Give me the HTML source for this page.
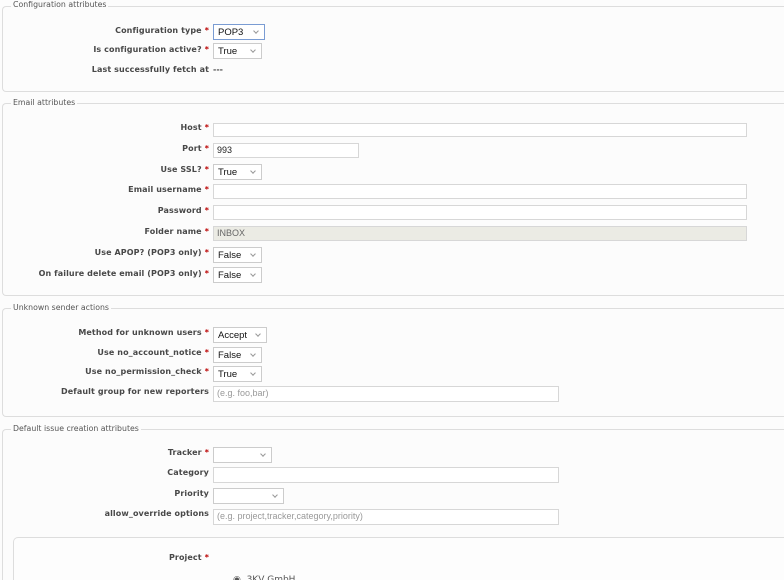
<!DOCTYPE html>
<html style="overflow:hidden;height:580px"><head><style>
*{box-sizing:border-box;margin:0;padding:0}
body{width:784px;height:580px;overflow:hidden;background:#fcfcfc;position:relative;font-family:"DejaVu Sans",Verdana,sans-serif;color:#484848}
.fs{position:absolute;left:2px;width:782px;border:1px solid #ddd;border-right:none;border-radius:4px 0 0 4px}
.lg{position:absolute;left:11px;background:#fcfcfc;padding:0 2px;font-size:7.8px;color:#555;line-height:10px}
.l{position:absolute;right:575px;font-size:8px;font-weight:bold;color:#484848;white-space:nowrap;line-height:10px;letter-spacing:0.1px}
.l b{color:#bb0000;font-weight:bold;margin-left:3px}
.in{position:absolute;left:213px;border:1px solid #d7d7d7;background:#fff;font-family:"Liberation Sans",Arial,sans-serif;font-size:9px;line-height:13px;padding-left:3px;color:#222}
.ph{color:#999}
.sel{position:absolute;left:213px;height:16px;border:1px solid #ccc;background:#fff;font-family:"Liberation Sans",Arial,sans-serif;font-size:9.5px;line-height:15px;padding-left:4px;color:#111}
.sel:after{content:"";position:absolute;right:6px;top:4px;width:3px;height:3px;border-right:1px solid #999;border-bottom:1px solid #999;transform:rotate(45deg)}
</style></head><body>

<div class="fs" style="top:6px;height:86px"></div>
<div class="lg" style="top:0px">Configuration attributes</div>
<div class="l" style="top:26px">Configuration type<b>*</b></div>
<div class="sel" style="top:24px;width:52px;border-color:#7a9cd3">POP3</div>
<div class="l" style="top:45px">Is configuration active?<b>*</b></div>
<div class="sel" style="top:43px;width:49px">True</div>
<div class="l" style="top:65px">Last successfully fetch at</div>
<div style="position:absolute;left:213px;top:65px;font-size:8px;font-weight:bold;line-height:10px">---</div>

<div class="fs" style="top:103px;height:193px"></div>
<div class="lg" style="top:98px">Email attributes</div>
<div class="l" style="top:123px">Host<b>*</b></div>
<div class="in" style="top:123px;width:534px;height:14px"></div>
<div class="l" style="top:144px">Port<b>*</b></div>
<div class="in" style="top:143px;width:146px;height:15px">993</div>
<div class="l" style="top:165px">Use SSL?<b>*</b></div>
<div class="sel" style="top:164px;width:49px">True</div>
<div class="l" style="top:185px">Email username<b>*</b></div>
<div class="in" style="top:184px;width:534px;height:15px"></div>
<div class="l" style="top:206px">Password<b>*</b></div>
<div class="in" style="top:205px;width:534px;height:15px"></div>
<div class="l" style="top:227px">Folder name<b>*</b></div>
<div class="in" style="top:226px;width:534px;height:15px;background:#ebebe4;color:#666">INBOX</div>
<div class="l" style="top:248px">Use APOP? (POP3 only)<b>*</b></div>
<div class="sel" style="top:247px;width:49px">False</div>
<div class="l" style="top:269px">On failure delete email (POP3 only)<b>*</b></div>
<div class="sel" style="top:267px;width:49px">False</div>

<div class="fs" style="top:308px;height:109px"></div>
<div class="lg" style="top:303px">Unknown sender actions</div>
<div class="l" style="top:328px">Method for unknown users<b>*</b></div>
<div class="sel" style="top:327px;width:54px">Accept</div>
<div class="l" style="top:348px">Use no_account_notice<b>*</b></div>
<div class="sel" style="top:347px;width:49px">False</div>
<div class="l" style="top:367px">Use no_permission_check<b>*</b></div>
<div class="sel" style="top:366px;width:49px">True</div>
<div class="l" style="top:387px">Default group for new reporters</div>
<div class="in ph" style="top:386px;width:346px;height:16px">(e.g. foo,bar)</div>

<div class="fs" style="top:429px;height:151px;border-bottom:none;border-radius:4px 0 0 0"></div>
<div class="lg" style="top:424px">Default issue creation attributes</div>
<div class="l" style="top:448px">Tracker<b>*</b></div>
<div class="sel" style="top:447px;width:59px"></div>
<div class="l" style="top:468px">Category</div>
<div class="in" style="top:467px;width:346px;height:16px"></div>
<div class="l" style="top:489px">Priority</div>
<div class="sel" style="top:488px;width:71px"></div>
<div class="l" style="top:509px">allow_override options</div>
<div class="in ph" style="top:509px;width:346px;height:16px">(e.g. project,tracker,category,priority)</div>

<div style="position:absolute;left:13px;top:537px;width:771px;height:43px;border:1px solid #ddd;border-right:none;border-bottom:none;border-radius:5px 0 0 0;background:#fdfdfd"></div>
<div class="l" style="top:553px">Project<b>*</b></div>
<div style="position:absolute;left:233px;top:575px;height:5px;overflow:hidden;font-size:9px;color:#555;line-height:10px">◉ &nbsp;3KV GmbH</div>
</body></html>
